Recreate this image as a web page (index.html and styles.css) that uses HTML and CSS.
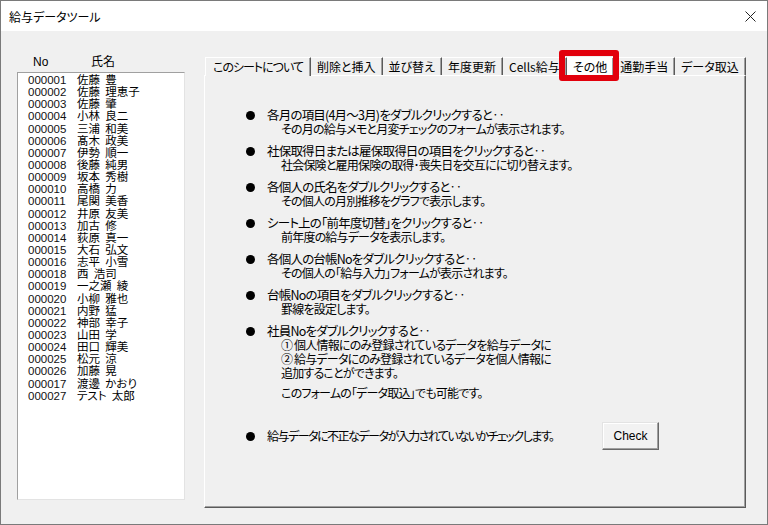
FILE: index.html
```html
<!DOCTYPE html>
<html>
<head>
    <meta charset="utf-8">
    <title>給与データツール</title>
    <link rel="stylesheet" href="styles.css">
</head>
<body>
    <div class="window">
        <!-- Title bar -->
        <div class="titlebar">
            <span class="title">給与データツール</span>
            <svg class="close" width="11" height="11" viewBox="0 0 11 11">
                <path d="M0.5 0.5 L10.5 10.5 M10.5 0.5 L0.5 10.5" stroke="#222" stroke-width="1" fill="none"/>
            </svg>
        </div>

        <div class="client">
            <!-- Staff list -->
            <div class="staff">
                <div class="staff-head">
                    <span class="col-no">No</span>
                    <span class="col-name">氏名</span>
                </div>
                <ul class="staff-list">
                    <li><span class="no">000001</span><span class="name">佐藤 豊</span></li>
                    <li><span class="no">000002</span><span class="name">佐藤 理恵子</span></li>
                    <li><span class="no">000003</span><span class="name">佐藤 肇</span></li>
                    <li><span class="no">000004</span><span class="name">小林 良二</span></li>
                    <li><span class="no">000005</span><span class="name">三浦 和美</span></li>
                    <li><span class="no">000006</span><span class="name">髙木 政美</span></li>
                    <li><span class="no">000007</span><span class="name">伊勢 順一</span></li>
                    <li><span class="no">000008</span><span class="name">後藤 純男</span></li>
                    <li><span class="no">000009</span><span class="name">坂本 秀樹</span></li>
                    <li><span class="no">000010</span><span class="name">高橋 力</span></li>
                    <li><span class="no">000011</span><span class="name">尾関 美香</span></li>
                    <li><span class="no">000012</span><span class="name">井原 友美</span></li>
                    <li><span class="no">000013</span><span class="name">加古 修</span></li>
                    <li><span class="no">000014</span><span class="name">荻原 真一</span></li>
                    <li><span class="no">000015</span><span class="name">大石 弘文</span></li>
                    <li><span class="no">000016</span><span class="name">志平 小雪</span></li>
                    <li><span class="no">000018</span><span class="name">西 浩司</span></li>
                    <li><span class="no">000019</span><span class="name">一之瀬 綾</span></li>
                    <li><span class="no">000020</span><span class="name">小柳 雅也</span></li>
                    <li><span class="no">000021</span><span class="name">内野 猛</span></li>
                    <li><span class="no">000022</span><span class="name">神部 幸子</span></li>
                    <li><span class="no">000023</span><span class="name">山田 学</span></li>
                    <li><span class="no">000024</span><span class="name">田口 輝美</span></li>
                    <li><span class="no">000025</span><span class="name">松元 涼</span></li>
                    <li><span class="no">000026</span><span class="name">加藤 晃</span></li>
                    <li><span class="no">000017</span><span class="name">渡邊 かおり</span></li>
                    <li><span class="no">000027</span><span class="name">テスト 太郎</span></li>
                </ul>
            </div>

            <!-- Multi page -->
            <div class="tabs">
                <div class="tab-strip">
                    <div class="tab active">このシートについて</div>
                    <div class="tab">削除と挿入</div>
                    <div class="tab">並び替え</div>
                    <div class="tab">年度更新</div>
                    <div class="tab">Cells給与</div>
                    <div class="tab marked">その他</div>
                    <div class="tab">通勤手当</div>
                    <div class="tab">データ取込</div>
                </div>

                <div class="tab-page">
                    <div class="note">
                        <span class="dot"></span>
                        <div class="note-body">
                            <p>各月の項目(4月～3月)をダブルクリックすると‥</p>
                            <p class="sub">その月の給与メモと月変チェックのフォームが表示されます。</p>
                        </div>
                    </div>
                    <div class="note">
                        <span class="dot"></span>
                        <div class="note-body">
                            <p>社保取得日または雇保取得日の項目をクリックすると‥</p>
                            <p class="sub">社会保険と雇用保険の取得･喪失日を交互にに切り替えます。</p>
                        </div>
                    </div>
                    <div class="note">
                        <span class="dot"></span>
                        <div class="note-body">
                            <p>各個人の氏名をダブルクリックすると‥</p>
                            <p class="sub">その個人の月別推移をグラフで表示します。</p>
                        </div>
                    </div>
                    <div class="note">
                        <span class="dot"></span>
                        <div class="note-body">
                            <p>シート上の「前年度切替」をクリックすると‥</p>
                            <p class="sub">前年度の給与データを表示します。</p>
                        </div>
                    </div>
                    <div class="note">
                        <span class="dot"></span>
                        <div class="note-body">
                            <p>各個人の台帳Noをダブルクリックすると‥</p>
                            <p class="sub">その個人の「給与入力」フォームが表示されます。</p>
                        </div>
                    </div>
                    <div class="note">
                        <span class="dot"></span>
                        <div class="note-body">
                            <p>台帳Noの項目をダブルクリックすると‥</p>
                            <p class="sub">罫線を設定します。</p>
                        </div>
                    </div>
                    <div class="note">
                        <span class="dot"></span>
                        <div class="note-body">
                            <p>社員Noをダブルクリックすると‥</p>
                            <p class="sub">① 個人情報にのみ登録されているデータを給与データに</p>
                            <p class="sub">② 給与データにのみ登録されているデータを個人情報に</p>
                            <p class="sub">追加することができます。</p>
                            <p class="sub gap">このフォームの「データ取込」でも可能です。</p>
                        </div>
                    </div>
                    <div class="note check-row">
                        <span class="dot"></span>
                        <p class="check-text">給与データに不正なデータが入力されていないかチェックします。</p>
                        <button class="btn">Check</button>
                    </div>
                </div>
            </div>
        </div>
    </div>
</body>
</html>
```

FILE: styles.css
```css
* {
    box-sizing: border-box;
    margin: 0;
    padding: 0;
}

body {
    background-color: #f0f0f0;
    color: #000;
    font-family: "Noto Sans CJK JP", sans-serif;
    font-feature-settings: "palt";
}

/* Window frame */
.window {
    width: 768px;
    height: 525px;
    border: 1px solid #7a7a7a;
    display: flex;
    flex-direction: column;
    background-color: #f0f0f0;
}

.titlebar {
    height: 30px;
    background-color: #fff;
    display: flex;
    align-items: center;
    justify-content: space-between;
    padding: 1px 11px 0 8px;
    font-size: 12px;
}

.close {
    display: block;
}

.client {
    flex: 1;
    display: flex;
    gap: 19px;
    padding-left: 16px;
}

/* Staff list */
.staff {
    width: 168px;
    padding-top: 24px;
}

.staff-head {
    display: flex;
    height: 14px;
    line-height: 14px;
    font-size: 12px;
    font-family: "Liberation Sans", "Noto Sans CJK JP", sans-serif;
}

.col-no {
    margin-left: 16px;
    width: 58px;
}

.staff-list {
    list-style: none;
    margin-top: 3px;
    height: 428px;
    background-color: #fff;
    border-top: 1px solid #a0a0a0;
    border-left: 1px solid #a0a0a0;
    border-right: 1px solid #e3e3e3;
    border-bottom: 1px solid #e3e3e3;
    padding: 1px 0 0 10px;
    font-family: "Liberation Sans", "Noto Sans CJK JP", sans-serif;
    font-size: 11.5px;
    line-height: 12.15px;
}

.staff-list li {
    display: flex;
    height: 12.15px;
}

.no {
    width: 49px;
    color: #111;
}

.name {
    font-size: 11.5px;
    word-spacing: 2px;
}

/* Tabs */
.tabs {
    width: 542px;
    padding-top: 26px;
}

.tab-strip {
    display: flex;
    height: 18px;
    padding-left: 1px;
    position: relative;
    z-index: 1;
}

.tab {
    font-size: 12px;
    line-height: 17px;
    height: 18px;
    padding: 0 6px;
    border-top: 1px solid #fff;
    border-right: 1px solid #5a5a5a;
    box-shadow: inset -1px 0 0 #a0a0a0;
    white-space: nowrap;
}

.tab.active {
    padding: 0 7px;
    letter-spacing: -1px;
    border-left: 1px solid #fff;
    height: 19px;
    background-color: #f0f0f0;
}

/* red highlight around the "その他" tab */
.tab.marked {
    position: relative;
    background-color: #fff;
    padding: 0 6px;
}

.tab.marked::after {
    content: "";
    position: absolute;
    top: -8px;
    bottom: -6px;
    left: -8px;
    right: -6px;
    border: 6px solid #e2000c;
    border-radius: 3px;
}

.tab-page {
    height: 433px;
    border-top: 1px solid #fff;
    border-left: 1px solid #fff;
    border-right: 1px solid #5a5a5a;
    border-bottom: 1px solid #5a5a5a;
    box-shadow: inset -1px -1px 0 #a0a0a0;
    padding: 32px 0 0 41px;
    font-size: 12.5px;
    line-height: 14px;
    letter-spacing: -0.8px;
}

.note {
    display: flex;
    align-items: flex-start;
    margin-bottom: 8px;
    white-space: nowrap;
}

.dot {
    width: 9px;
    height: 9px;
    border-radius: 50%;
    background-color: #000;
    margin: 3px 12px 0 0;
    flex-shrink: 0;
}

.note-body .sub {
    padding-left: 14px;
    font-size: 12px;
    letter-spacing: -0.8px;
}

.note-body .gap {
    margin-top: 6px;
}

.check-row {
    margin-top: 22px;
    align-items: center;
}

.check-row .dot {
    margin-top: 0;
}

.check-text {
    width: 335px;
    font-size: 12px;
    letter-spacing: -1.5px;
}

.btn {
    width: 57px;
    height: 28px;
    font-family: "Liberation Sans", sans-serif;
    font-size: 12px;
    letter-spacing: 0;
    background-color: #f2f2f2;
    border: 1px solid #696969;
    border-top-color: #e3e3e3;
    border-left-color: #e3e3e3;
    box-shadow: inset -1px -1px 0 #a0a0a0, inset 1px 1px 0 #fff;
}
```
